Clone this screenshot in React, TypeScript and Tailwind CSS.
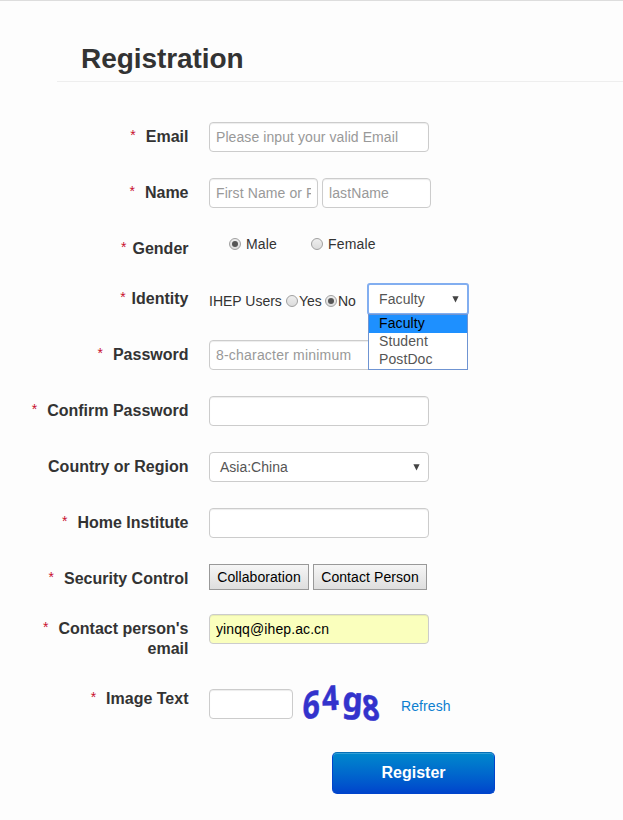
import type { ReactNode } from 'react';
import clsx from 'clsx';

interface RowProps {
    label: string;
    height: string;
    required?: boolean;
    tight?: boolean;
    children: ReactNode;
}

const inputClass =
    'block h-[30px] rounded-[4px] border border-[#ccc] bg-white px-[6px] text-[14px] text-[#555] shadow-[inset_0_1px_1px_rgba(0,0,0,0.075)] outline-none placeholder:text-[#999] placeholder:opacity-100';

const IDENTITIES = ['Faculty', 'Student', 'PostDoc'];

const CAPTCHA = [
    { char: '6', transform: 'translate(14 59) rotate(-4) skewX(-7) scale(0.8 1)', size: 38 },
    { char: '4', transform: 'translate(34.5 50.5) rotate(-3) scale(0.86 1)', size: 34 },
    { char: 'g', transform: 'translate(54 51) rotate(3) scale(0.94 1)', size: 34 },
    { char: '8', transform: 'translate(75 59) rotate(8) skewX(12) scale(0.9 1)', size: 34 },
];

function Row({ label, height, required = true, tight = false, children }: RowProps) {
    return (
        <div className={clsx('flex gap-[20.5px]', height)}>
            <div className="flex w-[188.5px] shrink-0 justify-end pt-[5px] text-right text-[16px] leading-5 font-bold">
                {required && (
                    <span className={clsx('text-[14px] leading-[16px] font-normal text-[#c8102e]', tight ? 'mr-[6px]' : 'mr-[10px]')}>
                        *
                    </span>
                )}
                <span className="whitespace-pre">{label}</span>
            </div>
            {children}
        </div>
    );
}

function Radio({ checked = false }: { checked?: boolean }) {
    return (
        <span className="flex size-[12px] shrink-0 items-center justify-center rounded-full border border-[#a0a0a0] bg-linear-to-b from-[#eee] to-[#dcdcdc]">
            {checked && <span className="size-[6px] rounded-full bg-[#555]" />}
        </span>
    );
}

function Arrow() {
    return (
        <svg className="h-[7px] w-[7px] shrink-0" viewBox="0 0 7 7">
            <path d="M0.4 0.3H6.6L3.5 6.6Z" fill="#444" />
        </svg>
    );
}

export default function App() {
    return (
        <div className="h-[820px] overflow-hidden border-t border-[#ddd] bg-[#fdfdfd] font-['Liberation_Sans',Arial,sans-serif] text-[14px] leading-5 text-[#333]">
            <h1 className="ml-[57px] h-[81px] border-b border-[#eee] pt-[38px] pl-6 text-[28px] leading-10 font-bold tracking-[-0.06px]">
                Registration
            </h1>

            <form className="pt-10">
                <Row label="Email" height="h-14">
                    <input className={clsx(inputClass, 'w-[220px] tracking-[0.08px]')} placeholder="Please input your valid Email" />
                </Row>

                <Row label="Name" height="h-14">
                    <div className="flex gap-1">
                        <input className={clsx(inputClass, 'w-[109px] tracking-[0.1px]')} placeholder="First Name or First" />
                        <input className={clsx(inputClass, 'w-[109px] tracking-[0.1px]')} placeholder="lastName" />
                    </div>
                </Row>

                <Row label="Gender" height="h-[50px]" tight>
                    <div className="flex h-5 items-center pl-5 tracking-[0.15px]">
                        <Radio checked />
                        <span className="ml-[5px] w-[65px]">Male</span>
                        <Radio />
                        <span className="ml-[5px]">Female</span>
                    </div>
                </Row>

                <Row label="Identity" height="h-14" tight>
                    <div className="flex">
                        <div className="mt-[7px] flex h-5 w-[158px] items-center whitespace-nowrap">
                            <span className="w-[77px]">IHEP Users</span>
                            <Radio />
                            <span className="ml-px w-[26px]">Yes</span>
                            <Radio checked />
                            <span className="ml-px">No</span>
                        </div>
                        <div className="relative h-[30px] w-[102px]">
                            <div className="-mt-px flex h-8 w-[102px] items-center justify-between rounded-[3px] border-2 border-[#82aef0] bg-white pr-[8px] pl-[10px] tracking-[0.1px] text-[#555]">
                                Faculty
                                <Arrow />
                            </div>
                            <ul className="absolute top-[30px] left-px z-10 w-[100px] border border-[#6f94d2] bg-white tracking-[0.1px] text-[#555]">
                                {IDENTITIES.map((name, i) => (
                                    <li
                                        key={name}
                                        className={clsx('h-[18px] pl-[10px] leading-[16px]', i === 0 && 'bg-[#1e90ff] text-black')}
                                    >
                                        {name}
                                    </li>
                                ))}
                            </ul>
                        </div>
                    </div>
                </Row>

                <Row label="Password" height="h-14">
                    <input className={clsx(inputClass, 'w-[220px] tracking-[0.2px]')} placeholder="8-character minimum" />
                </Row>

                <Row label="Confirm Password" height="h-14">
                    <input className={clsx(inputClass, 'w-[220px]')} />
                </Row>

                <Row label="Country or Region" height="h-14" required={false}>
                    <div className="flex h-[30px] w-[220px] items-center justify-between rounded-[4px] border border-[#ccc] bg-white pr-[8px] pl-[10px] text-[#555]">
                        Asia:China
                        <Arrow />
                    </div>
                </Row>

                <Row label="Home Institute" height="h-14">
                    <input className={clsx(inputClass, 'w-[220px]')} />
                </Row>

                <Row label="Security Control" height="h-[50px]">
                    <div className="flex gap-1 tracking-[0.08px] text-black">
                        <button type="button" className="h-[26px] w-[100px] border border-[#999] bg-linear-to-b from-[#f6f6f6] to-[#dedede]">
                            Collaboration
                        </button>
                        <button type="button" className="h-[26px] w-[114px] border border-[#999] bg-linear-to-b from-[#f6f6f6] to-[#dedede]">
                            Contact Person
                        </button>
                    </div>
                </Row>

                <Row label={"Contact person's\nemail"} height="h-[70px]">
                    <input
                        className="block h-[30px] w-[220px] rounded-[4px] border border-[#ccc] bg-[#faffbd] px-[6px] text-[14px] tracking-[0.1px] text-black shadow-[inset_0_1px_1px_rgba(0,0,0,0.075)] outline-none"
                        defaultValue="yinqq@ihep.ac.cn"
                    />
                </Row>

                <Row label="Image Text" height="h-[68px]">
                    <div className="flex pt-[5px]">
                        <input className={clsx(inputClass, 'w-[84px]')} />
                        <svg className="-mt-[29px] -ml-[5px] h-[88px] w-[110px]" viewBox="0 0 110 88">
                            <g fill="#3333cc" stroke="#3333cc" strokeWidth="0.5" fontFamily="Noto Sans, sans-serif" fontWeight="700">
                                {CAPTCHA.map(({ char, transform, size }) => (
                                    <text key={char} transform={transform} fontSize={size}>
                                        {char}
                                    </text>
                                ))}
                            </g>
                        </svg>
                        <a className="mt-[7px] ml-[3px] tracking-[0.1px] text-[#0d7fd0]">Refresh</a>
                    </div>
                </Row>

                <button
                    type="button"
                    className="ml-[332px] block h-[42px] w-[163px] rounded-[5px] border border-[#04c] border-t-[#0670b8] bg-linear-to-b from-[#08c] to-[#04c] text-[16px] font-bold text-white shadow-[inset_0_1px_0_rgba(255,255,255,0.2)]"
                >
                    Register
                </button>
            </form>
        </div>
    );
}
